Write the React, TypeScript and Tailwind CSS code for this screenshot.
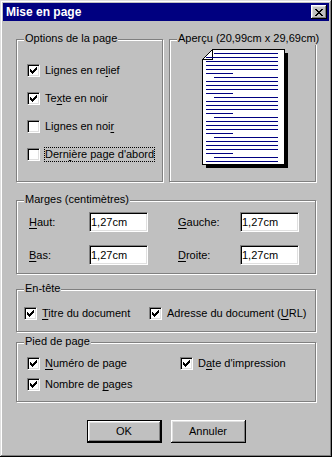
import React from "react";

const bevelBtn =
  "shadow-[inset_-1px_-1px_0_#000,inset_1px_1px_0_#fff,inset_-2px_-2px_0_#808080,inset_2px_2px_0_#dfdfdf]";

function Pixels({ px, w, h }: { px: [number, number][]; w: number; h: number }) {
  return (
    <svg width={w} height={h} viewBox={`0 0 ${w} ${h}`} shapeRendering="crispEdges" className="block">
      {px.map(([x, y], i) => (
        <rect key={i} x={x} y={y} width="1" height="1" fill="#000" />
      ))}
    </svg>
  );
}

const checkPx: [number, number][] = [
  [8, 2], [7, 3], [8, 3], [2, 4], [6, 4], [7, 4], [8, 4], [2, 5], [3, 5], [5, 5], [6, 5], [7, 5],
  [2, 6], [3, 6], [4, 6], [5, 6], [6, 6], [3, 7], [4, 7], [5, 7], [4, 8],
];

const closePx: [number, number][] = [
  [0, 0], [1, 0], [6, 0], [7, 0],
  [1, 1], [2, 1], [5, 1], [6, 1],
  [2, 2], [3, 2], [4, 2], [5, 2],
  [3, 3], [4, 3],
  [2, 4], [3, 4], [4, 4], [5, 4],
  [1, 5], [2, 5], [5, 5], [6, 5],
  [0, 6], [1, 6], [6, 6], [7, 6],
];

function Box({ checked }: { checked?: boolean }) {
  return (
    <div className="w-[13px] h-[13px] shrink-0 bg-white border border-t-[#808080] border-l-[#808080] border-r-white border-b-white shadow-[inset_1px_1px_0_#000,inset_-1px_-1px_0_#dfdfdf]">
      {checked && <Pixels px={checkPx} w={11} h={11} />}
    </div>
  );
}

function CheckItem({
  checked,
  focus,
  className = "",
  children,
}: {
  checked?: boolean;
  focus?: boolean;
  className?: string;
  children: React.ReactNode;
}) {
  return (
    <div className={`flex items-center gap-[4px] h-[13px] ${className}`}>
      <Box checked={checked} />
      <span
        className={`border leading-[13px] whitespace-nowrap ${
          focus ? "border-dotted border-black" : "border-transparent"
        }`}
      >
        {children}
      </span>
    </div>
  );
}

function Group({
  label,
  className = "",
  children,
}: {
  label: string;
  className?: string;
  children?: React.ReactNode;
}) {
  return (
    <div
      className={`relative border border-[#808080] shadow-[inset_1px_1px_0_#fff,1px_1px_0_#fff] ${className}`}
    >
      <span className="absolute left-[7px] top-[-8px] bg-[#c0c0c0] px-[1px] leading-[13px] whitespace-nowrap">
        {label}
      </span>
      {children}
    </div>
  );
}

function Field({ value }: { value: string }) {
  return (
    <div className="w-[59px] h-[20px] shrink-0 bg-white border border-t-[#808080] border-l-[#808080] border-r-white border-b-white shadow-[inset_1px_1px_0_#000,inset_-1px_-1px_0_#dfdfdf] pl-[1px] leading-[18px]">
      {value}
    </div>
  );
}

function U({ children }: { children: React.ReactNode }) {
  return <span className="underline underline-offset-[2px]">{children}</span>;
}

function PagePreview() {
  const lines: { y: number; t: "i" | "f" | "s" }[] = [];
  lines.push({ y: 4, t: "i" });
  [8, 12, 16, 20].forEach((y) => lines.push({ y, t: "f" }));
  lines.push({ y: 24, t: "s" });
  for (let p = 0; p < 4; p++) {
    const b = 28 + p * 20;
    lines.push({ y: b, t: "i" });
    lines.push({ y: b + 4, t: "f" });
    lines.push({ y: b + 8, t: "f" });
    lines.push({ y: b + 12, t: "f" });
    lines.push({ y: b + 16, t: "s" });
  }
  lines.push({ y: 108, t: "i" });
  lines.push({ y: 112, t: "f" });
  return (
    <svg width="88" height="121" viewBox="0 0 88 121" shapeRendering="crispEdges" className="block">
      <rect x="83" y="4" width="3" height="115" fill="#000" />
      <rect x="4" y="116" width="82" height="3" fill="#000" />
      <path d="M10.5 0.5 H82.5 V115.5 H0.5 V10.5 Z" fill="#fff" stroke="#000" />
      <path d="M0.5 10.5 H10.5 V0.5" fill="none" stroke="#000" />
      {lines.map((l, i) => {
        const x1 = l.t === "i" ? 12 : 4;
        const x2 = l.t === "s" ? 31 : 76;
        return <rect key={i} x={x1} y={l.y} width={x2 - x1} height="1" fill="#000080" />;
      })}
    </svg>
  );
}

export default function App() {
  return (
    <div className="w-[332px] h-[457px] bg-[#c0c0c0] p-[3px] text-[11px] text-black font-['Liberation_Sans',Arial,sans-serif] shadow-[inset_-1px_-1px_0_#000,inset_1px_1px_0_#dfdfdf,inset_-2px_-2px_0_#808080,inset_2px_2px_0_#fff]">
      <div className="h-[18px] bg-[#000080] flex items-center justify-between pl-[3px] pr-[2px]">
        <span className="text-white font-bold text-[12px] leading-[18px]">Mise en page</span>
        <div className={`w-[16px] h-[14px] bg-[#c0c0c0] flex items-center justify-center ${bevelBtn}`}>
          <Pixels px={closePx} w={8} h={7} />
        </div>
      </div>

      <div className="px-[13px] flex flex-col">
        <div className="flex gap-[6px] mt-[18px]">
          <Group label="Options de la page" className="w-[147px] h-[143px] pt-[24px] pl-[10px]">
            <div className="flex flex-col gap-[15px]">
              <CheckItem checked>
                Lignes en re<U>l</U>ief
              </CheckItem>
              <CheckItem checked>
                Te<U>x</U>te en noir
              </CheckItem>
              <CheckItem>
                Lignes en noi<U>r</U>
              </CheckItem>
              <CheckItem focus>
                Dern<U>i</U>ère page d'abord
              </CheckItem>
            </div>
          </Group>
          <Group label="Aperçu (20,99cm x 29,69cm)" className="w-[147px] h-[143px] pt-[9px] pl-[32px]">
            <PagePreview />
          </Group>
        </div>

        <Group label="Marges (centimètres)" className="h-[74px] mt-[18px] pt-[11px] pl-[12px]">
          <div className="flex flex-col gap-[13px]">
            <div className="flex items-center h-[20px]">
              <span className="w-[60px]">
                <U>H</U>aut:
              </span>
              <Field value="1,27cm" />
              <span className="w-[62px] ml-[30px]">
                <U>G</U>auche:
              </span>
              <Field value="1,27cm" />
            </div>
            <div className="flex items-center h-[20px]">
              <span className="w-[60px]">
                <U>B</U>as:
              </span>
              <Field value="1,27cm" />
              <span className="w-[62px] ml-[30px]">
                <U>D</U>roite:
              </span>
              <Field value="1,27cm" />
            </div>
          </div>
        </Group>

        <Group label="En-tête" className="h-[43px] mt-[15px] pt-[17px] pl-[7px]">
          <div className="flex">
            <CheckItem checked className="w-[125px]">
              <U>T</U>itre du document
            </CheckItem>
            <CheckItem checked>
              Adresse du document (<U>U</U>RL)
            </CheckItem>
          </div>
        </Group>

        <Group label="Pied de page" className="h-[60px] mt-[10px] pt-[14px] pl-[10px]">
          <div className="flex flex-col gap-[8px]">
            <div className="flex">
              <CheckItem checked className="w-[153px]">
                <U>N</U>uméro de page
              </CheckItem>
              <CheckItem checked>
                D<U>a</U>te d'impression
              </CheckItem>
            </div>
            <CheckItem checked>
              Nombre de <U>p</U>ages
            </CheckItem>
          </div>
        </Group>

        <div className="flex justify-center gap-[9px] mt-[18px]">
          <div className="w-[75px] h-[23px] border border-black bg-[#c0c0c0] flex items-center justify-center shadow-[inset_-1px_-1px_0_#000,inset_1px_1px_0_#fff,inset_-2px_-2px_0_#808080,inset_2px_2px_0_#dfdfdf]">
            OK
          </div>
          <div className={`w-[75px] h-[23px] bg-[#c0c0c0] flex items-center justify-center ${bevelBtn}`}>
            Annuler
          </div>
        </div>
      </div>
    </div>
  );
}
